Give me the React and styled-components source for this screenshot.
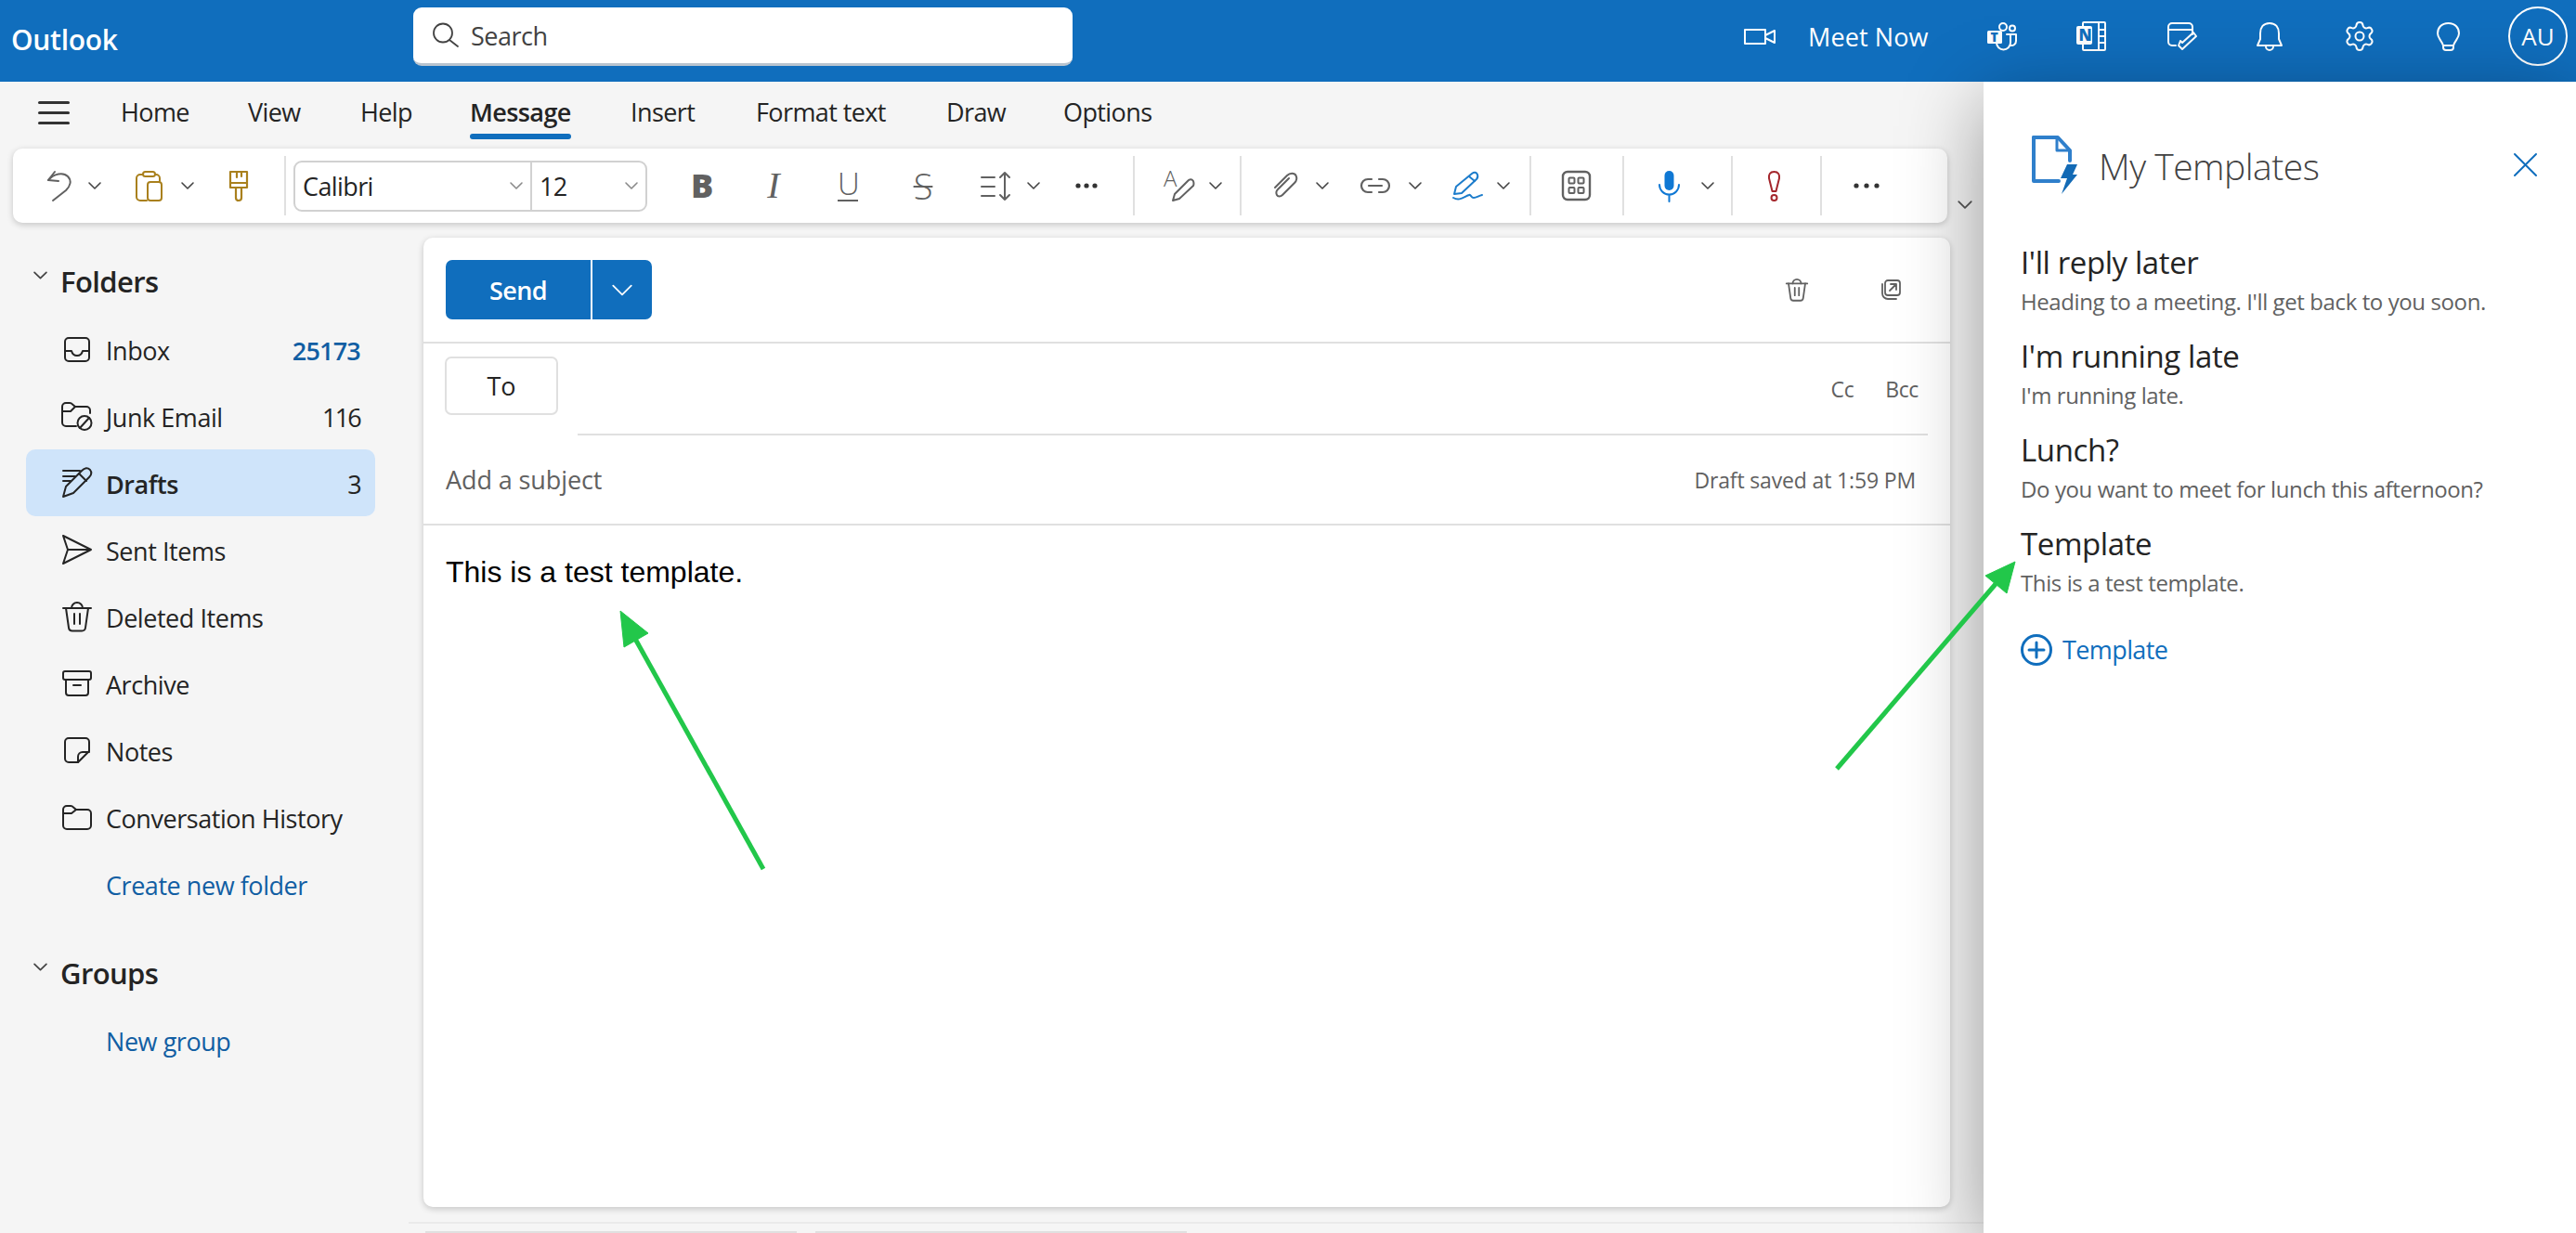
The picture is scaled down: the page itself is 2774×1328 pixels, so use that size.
import React from "react";
import styled, { createGlobalStyle } from "styled-components";
import { Settings } from "lucide-react";

const GlobalStyle = createGlobalStyle`
  html, body {
    margin: 0;
    padding: 0;
    background: #f5f5f5;
    font-family: "Open Sans", "Noto Sans", sans-serif;
    overflow: hidden;
  }
  * { box-sizing: border-box; }
`;

const Page = styled.div`
  position: relative;
  width: 2774px;
  height: 1328px;
  overflow: hidden;
  display: flex;
  flex-direction: column;
`;

const TopBar = styled.header`
  height: 88px;
  flex: none;
  display: flex;
  align-items: center;
  background: #106ebd;
  color: #fff;
`;

const Brand = styled.div`
  width: 445px;
  padding-left: 12px;
  font-size: 30px;
  font-weight: 600;
  letter-spacing: -0.3px;
  margin-top: -4px;
`;

const SearchBox = styled.div`
  width: 710px;
  height: 63px;
  margin-top: -9px;
  display: flex;
  align-items: center;
  gap: 13px;
  padding-left: 21px;
  background: #fff;
  color: #424242;
  border-radius: 9px;
  border-bottom: 3px solid #b9c4cf;
  font-size: 27px;
  letter-spacing: -0.5px;
`;

const TopSlot = styled.div`
  flex: none;
  margin-left: ${(p) => p.$ml}px;
  display: flex;
  align-items: center;
  margin-top: -10px;
`;

const MeetNow = styled.span`
  font-size: 27px;
  font-weight: 400;
  letter-spacing: 0.1px;
  white-space: nowrap;
  display: block;
  width: 128px;
`;

const Avatar = styled.div`
  width: 64px;
  height: 64px;
  border-radius: 50%;
  border: 2px solid #fff;
  display: flex;
  align-items: center;
  justify-content: center;
  font-size: 26px;
  font-weight: 400;
`;

const Svg = styled.svg`
  display: block;
  flex: none;
  fill: none;
  overflow: visible;
  stroke: currentColor;
  stroke-width: ${(p) => p.$sw || 2};
  stroke-linecap: round;
  stroke-linejoin: round;
  color: ${(p) => p.$c || "inherit"};
`;

function Ico({ w, h, vb, sw, c, children }) {
  return (
    <Svg width={w} height={h} viewBox={vb || `0 0 ${w} ${h}`} $sw={sw} $c={c}>
      {children}
    </Svg>
  );
}

const Body = styled.div`
  flex: 1;
  min-height: 0;
  display: flex;
`;

const Main = styled.div`
  width: 2136px;
  flex: none;
  display: flex;
  flex-direction: column;
`;

const Nav = styled.nav`
  height: 72px;
  flex: none;
  display: flex;
  align-items: flex-start;
  color: #242424;
`;

const Burger = styled.div`
  width: 34px;
  margin: 21px 55px 0 41px;
  display: flex;
  flex-direction: column;
  gap: 8px;
  i {
    display: block;
    height: 3px;
    border-radius: 2px;
    background: #333;
  }
`;

const Tab = styled.div`
  flex: none;
  width: ${(p) => p.$w}px;
  margin-top: 16px;
  font-size: 27px;
  line-height: 34px;
  letter-spacing: -0.6px;
  font-weight: ${(p) => (p.$active ? 600 : 400)};
`;

const TabText = styled.span`
  display: inline-block;
  white-space: nowrap;
  &::after {
    content: "";
    display: ${(p) => (p.$active ? "block" : "none")};
    height: 6px;
    margin-top: 6px;
    border-radius: 3px;
    background: #106ebd;
  }
`;

const ToolRow = styled.div`
  flex: none;
  height: 80px;
  margin-left: 14px;
  display: flex;
`;

const Toolbar = styled.div`
  width: 2083px;
  height: 80px;
  display: flex;
  align-items: center;
  background: #fff;
  border-radius: 10px;
  box-shadow: 0 2px 7px rgba(0, 0, 0, 0.2);
`;

const Slot = styled.div`
  flex: none;
  margin-left: ${(p) => p.$ml}px;
  display: flex;
  align-items: center;
  justify-content: center;
  color: ${(p) => p.$c || "#616161"};
`;

const Sep = styled.div`
  flex: none;
  width: 2px;
  height: 64px;
  margin-left: ${(p) => p.$ml}px;
  background: #e0e0e0;
`;

const FontGroup = styled.div`
  flex: none;
  width: 381px;
  height: 55px;
  margin-left: 8px;
  display: flex;
  border: 2px solid #d1d1d1;
  border-radius: 9px;
  color: #242424;
  font-size: 27px;
  letter-spacing: -0.6px;
`;

const FontCell = styled.div`
  width: ${(p) => p.$w}px;
  flex: none;
  display: flex;
  align-items: center;
  justify-content: space-between;
  padding: 0 8px 0 ${(p) => p.$pl}px;
  color: #242424;
  & + & {
    border-left: 2px solid #d1d1d1;
  }
  svg {
    color: #8a8a8a;
  }
`;

const Glyph = styled.span`
  display: block;
  width: ${(p) => p.$w}px;
  text-align: center;
  line-height: 36px;
  color: #616161;
`;

const BoldGlyph = styled(Glyph)`
  font-size: 36px;
  font-weight: 800;
  letter-spacing: 0;
`;

const ItalicGlyph = styled(Glyph)`
  font-family: "Liberation Serif", serif;
  font-size: 40px;
  font-style: italic;
`;

const UnderGlyph = styled(Glyph)`
  font-size: 33px;
  font-weight: 300;
  height: 34px;
  line-height: 30px;
  border-bottom: 2px solid #616161;
`;

const StrikeGlyph = styled(Glyph)`
  font-size: 38px;
  font-weight: 300;
  text-decoration: line-through;
  text-decoration-thickness: 2px;
`;

const SvgText = styled.text`
  stroke: none;
  fill: ${(p) => p.$fill};
  font-size: ${(p) => p.$size}px;
  font-weight: ${(p) => p.$weight || 400};
  font-family: "Open Sans", sans-serif;
`;

const ExpandSlot = styled.div`
  flex: none;
  margin: 56px 0 0 11px;
  color: #555;
`;

const Workspace = styled.div`
  flex: 1;
  min-height: 0;
  display: flex;
  margin-top: 16px;
`;

const Sidebar = styled.aside`
  width: 456px;
  flex: none;
  color: #242424;
`;

const SectionHead = styled.div`
  display: flex;
  align-items: center;
  padding: ${(p) => p.$pt}px 0 ${(p) => p.$pb}px 36px;
  gap: 14px;
  font-size: 31px;
  line-height: 36px;
  font-weight: 600;
  letter-spacing: -0.6px;
  color: #242424;
  svg {
    margin-top: -14px;
    color: #444;
  }
`;

const Row = styled.div`
  height: 72px;
  margin: 0 52px 0 28px;
  padding: 0 16px 0 38px;
  display: flex;
  align-items: center;
  border-radius: 10px;
  font-size: 27px;
  letter-spacing: -0.45px;
  background: ${(p) => (p.$active ? "#cfe4fa" : "transparent")};
  font-weight: ${(p) => (p.$active ? 600 : 400)};
`;

const RowIcon = styled.div`
  width: 34px;
  flex: none;
  display: flex;
  justify-content: center;
  margin-right: 14px;
`;

const RowLabel = styled.span`
  flex: 1;
  padding-top: 2px;
  white-space: nowrap;
  color: ${(p) => p.$c || "inherit"};
`;

const Count = styled.span`
  padding-top: 2px;
  font-weight: ${(p) => (p.$bold ? 600 : 400)};
  color: ${(p) => (p.$bold ? "#115ea3" : "#242424")};
  letter-spacing: ${(p) => (p.$bold ? "-0.8px" : "-1.8px")};
`;

const Column = styled.div`
  width: 1680px;
  flex: none;
  display: flex;
  flex-direction: column;
`;

const Card = styled.section`
  width: 1644px;
  height: 1044px;
  flex: none;
  display: flex;
  flex-direction: column;
  background: #fff;
  border-radius: 10px;
  box-shadow: 0 2px 7px rgba(0, 0, 0, 0.2);
`;

const ActionBar = styled.div`
  height: 114px;
  flex: none;
  display: flex;
  align-items: flex-start;
  padding: 24px 53px 0 24px;
  border-bottom: 2px solid #e0e0e0;
`;

const SendGroup = styled.div`
  display: flex;
  height: 64px;
  background: #106ebd;
  border-radius: 7px;
  overflow: hidden;
  color: #fff;
`;

const SendButton = styled.div`
  width: 158px;
  display: flex;
  align-items: center;
  justify-content: center;
  font-size: 27px;
  font-weight: 600;
  letter-spacing: -0.6px;
  border-right: 2px solid #fff;
`;

const SendArrow = styled.div`
  width: 64px;
  display: flex;
  align-items: center;
  justify-content: center;
`;

const ActionIcons = styled.div`
  margin-left: auto;
  display: flex;
  align-items: center;
  gap: 77px;
  height: 64px;
  color: #616161;
`;

const ToRow = styled.div`
  height: 99px;
  flex: none;
  display: flex;
  align-items: flex-start;
  padding: 14px 24px 0 23px;
`;

const ToButton = styled.div`
  width: 122px;
  height: 63px;
  flex: none;
  display: flex;
  align-items: center;
  justify-content: center;
  border: 2px solid #e0e0e0;
  border-radius: 7px;
  font-size: 27px;
  font-weight: 500;
  color: #242424;
`;

const ToField = styled.div`
  flex: 1;
  height: 85px;
  margin-left: 21px;
  padding: 0 10px 14px 0;
  display: flex;
  align-items: center;
  justify-content: flex-end;
  gap: 34px;
  border-bottom: 2px solid #e0e0e0;
  color: #616161;
  font-size: 23px;
  letter-spacing: -0.4px;
`;

const SubjectRow = styled.div`
  height: 97px;
  flex: none;
  display: flex;
  align-items: center;
  justify-content: space-between;
  padding: 0 37px 0 24px;
  border-bottom: 2px solid #e0e0e0;
  color: #616161;
`;

const SubjectText = styled.span`
  font-size: 27px;
  letter-spacing: -0.1px;
`;

const SavedText = styled.span`
  font-size: 23px;
  letter-spacing: -0.15px;
`;

const MessageBody = styled.div`
  padding: 30px 24px;
  font-family: "Liberation Sans", Arial, sans-serif;
  font-size: 32px;
  line-height: 40px;
  color: #000;
`;

const Footer = styled.div`
  margin: 16px 0 0 -16px;
  height: 12px;
  display: flex;
  gap: 20px;
  padding: 8px 0 0 18px;
  border-top: 2px solid #eaeaea;
`;

const FooterTab = styled.div`
  width: 400px;
  height: 4px;
  border-top: 2px solid #e0e0e0;
`;

const Panel = styled.aside`
  position: relative;
  z-index: 2;
  flex: none;
  width: 638px;
  background: #fff;
  box-shadow: 0 20px 80px rgba(0, 0, 0, 0.38);
`;

const PanelHeader = styled.div`
  display: flex;
  align-items: center;
  padding: 58px 42px 0 52px;
`;

const PanelTitle = styled.h2`
  margin: 2px 0 0 23px;
  font-size: 39px;
  font-weight: 300;
  letter-spacing: -0.5px;
  color: #424242;
  white-space: nowrap;
  flex: 1;
`;

const TemplateList = styled.div`
  margin-top: 52px;
  padding-left: 40px;
`;

const Template = styled.div`
  height: 101px;
`;

const TemplateName = styled.div`
  font-size: 33px;
  line-height: 44px;
  letter-spacing: -0.4px;
  color: #242424;
`;

const TemplateText = styled.div`
  margin-top: 3px;
  font-size: 24px;
  line-height: 34px;
  letter-spacing: -0.4px;
  color: #616161;
  white-space: nowrap;
`;

const AddTemplate = styled.div`
  display: flex;
  align-items: center;
  gap: 11px;
  margin-top: 16px;
  font-size: 27px;
  letter-spacing: -0.6px;
  color: #106ebd;
`;

const ArrowLayer = styled.svg`
  position: absolute;
  top: 0;
  left: 0;
  z-index: 5;
  pointer-events: none;
`;

const Chev = ({ w = 14, h = 8, sw = 1.6 }) => (
  <Ico w={w} h={h} vb="0 0 14 8" sw={sw}>
    <path d="M1 1 L7 7 L13 1" />
  </Ico>
);

const Dots = ({ w }) => (
  <Svg width={w} height={6} viewBox={`0 0 ${w} 6`} $c="#333">
    <g fill="currentColor" stroke="none">
      <circle cx="3" cy="3" r="2.6" />
      <circle cx={w / 2} cy="3" r="2.6" />
      <circle cx={w - 3} cy="3" r="2.6" />
    </g>
  </Svg>
);

const TrashPath = () => (
  <>
    <path d="M1 7 H31" />
    <path d="M10 7 a6 6 0 0 1 12 0" />
    <path d="M4 7 L7 28 a4 4 0 0 0 4 3.5 H21 a4 4 0 0 0 4 -3.5 L28 7" />
    <path d="M13 13 V24 M19 13 V24" />
  </>
);

const folders = [
  {
    name: "Inbox",
    count: "25173",
    bold: true,
    icon: (
      <Ico w={28} h={27}>
        <rect x="1" y="1" width="26" height="25" rx="4" />
        <path d="M1 15 H8 C9 19 11 20 14 20 C17 20 19 19 20 15 H27" />
      </Ico>
    ),
  },
  {
    name: "Junk Email",
    count: "116",
    icon: (
      <Ico w={34} h={31}>
        <path d="M16 26 H5 a4 4 0 0 1 -4 -4 V5 a4 4 0 0 1 4 -4 H9 a4 4 0 0 1 3 1.4 L15 5 H27 a4 4 0 0 1 4 4 V12" />
        <path d="M1 10 H10 L15 5" />
        <circle cx="25" cy="22.5" r="7.5" />
        <path d="M20 28 L30 17" />
      </Ico>
    ),
  },
  {
    name: "Drafts",
    count: "3",
    active: true,
    icon: (
      <Ico w={33} h={34}>
        <path d="M1 4 H19 M1 10 H14 M1 15 H9" />
        <path d="M1 32 L4 21 L21 4 Q26 -1 30 3 Q33 7 29 11 L12 28 Z" />
        <path d="M18 7 L26 15" />
      </Ico>
    ),
  },
  {
    name: "Sent Items",
    icon: (
      <Ico w={33} h={32}>
        <path d="M1 1 L31 16 L1 31 L6 16 Z M6 16 H31" />
      </Ico>
    ),
  },
  {
    name: "Deleted Items",
    icon: (
      <Ico w={32} h={33}>
        <TrashPath />
      </Ico>
    ),
  },
  {
    name: "Archive",
    icon: (
      <Ico w={32} h={28}>
        <rect x="1" y="1" width="30" height="9" rx="2" />
        <path d="M4 10 V24 a3 3 0 0 0 3 3 H25 a3 3 0 0 0 3 -3 V10" />
        <path d="M12 16 H20" />
      </Ico>
    ),
  },
  {
    name: "Notes",
    icon: (
      <Ico w={28} h={28}>
        <path d="M27 15 V5 a4 4 0 0 0 -4 -4 H5 a4 4 0 0 0 -4 4 V23 a4 4 0 0 0 4 4 H15 Z" />
        <path d="M15 27 V21 a5 5 0 0 1 5 -5 H27" />
      </Ico>
    ),
  },
  {
    name: "Conversation History",
    icon: (
      <Ico w={32} h={27}>
        <path d="M1 5 a4 4 0 0 1 4 -4 H9 a4 4 0 0 1 3 1.4 L15 5 H27 a4 4 0 0 1 4 4 V22 a4 4 0 0 1 -4 4 H5 a4 4 0 0 1 -4 -4 Z" />
        <path d="M1 9 H10 L15 5" />
      </Ico>
    ),
  },
];

const templates = [
  ["I'll reply later", "Heading to a meeting. I'll get back to you soon."],
  ["I'm running late", "I'm running late."],
  ["Lunch?", "Do you want to meet for lunch this afternoon?"],
  ["Template", "This is a test template."],
];

const tabs = [
  ["Home", 137],
  ["View", 121],
  ["Help", 118],
  ["Message", 173, true],
  ["Insert", 135],
  ["Format text", 205],
  ["Draw", 126],
  ["Options", 120],
];

const GOLD = "#a9801d";
const BLUE = "#1c7ccb";

export default function App() {
  return (
    <Page>
      <GlobalStyle />
      <TopBar>
        <Brand>Outlook</Brand>
        <SearchBox>
          <Ico w={28} h={26} sw={1.8}>
            <circle cx="11" cy="10.5" r="10" />
            <path d="M18 18 L27 25" />
          </Ico>
          Search
        </SearchBox>
        <TopSlot $ml={723}>
          <Ico w={34} h={17} sw={2}>
            <rect x="1" y="1" width="22" height="15" />
            <path d="M23 7 L33 2 V15 L23 10" />
          </Ico>
        </TopSlot>
        <TopSlot $ml={35}>
          <MeetNow>Meet Now</MeetNow>
        </TopSlot>
        <TopSlot $ml={65}>
          <Ico w={32} h={30} sw={2}>
            <circle cx="17" cy="5" r="4" />
            <circle cx="27" cy="6.5" r="3" />
            <path d="M21 13 H31 V20 a5 5 0 0 1 -6 5" />
            <path d="M25 13 V22 a7.5 7.5 0 0 1 -15 0 V21" />
            <rect x="0" y="9" width="16" height="14" rx="1.5" fill="#fff" stroke="none" />
            <SvgText x="3.6" y="21" $fill="#106ebd" $size={14} $weight={800}>
              T
            </SvgText>
          </Ico>
        </TopSlot>
        <TopSlot $ml={64}>
          <Ico w={32} h={32} sw={2}>
            <rect x="7" y="1" width="24" height="30" rx="1" />
            <path d="M24 1 V31 M24 9 H31 M24 16 H31 M24 23 H31" />
            <rect x="0" y="5" width="17" height="20" rx="2" fill="#fff" stroke="none" />
            <SvgText x="2.4" y="21" $fill="#106ebd" $size={17} $weight={800}>
              N
            </SvgText>
          </Ico>
        </TopSlot>
        <TopSlot $ml={66}>
          <Ico w={32} h={32} sw={2}>
            <path d="M9 26 H5 a4 4 0 0 1 -4 -4 V6 a4 4 0 0 1 4 -4 H23 a4 4 0 0 1 4 4 V14 M1 9 H27" />
            <path d="M12 26 L16 30 L31 16 L28 12 L16 23 L14 21 Z" />
          </Ico>
        </TopSlot>
        <TopSlot $ml={64}>
          <Ico w={28} h={31} sw={2}>
            <path d="M14 1 C7 1 4 6 4 12 V18 L1 25 H27 L24 18 V12 C24 6 21 1 14 1 Z" />
            <path d="M10 26 a4 4 0 0 0 8 0" />
          </Ico>
        </TopSlot>
        <TopSlot $ml={65}>
          <Settings size={36} strokeWidth={1.35} />
        </TopSlot>
        <TopSlot $ml={65}>
          <Ico w={25} h={31} sw={2}>
            <path d="M12.5 1 C5 1 1 6 1 12 C1 17 5 19 7 25 H18 C20 19 24 17 24 12 C24 6 20 1 12.5 1 Z" />
            <path d="M7 25 V27 a3 3 0 0 0 3 3 H15 a3 3 0 0 0 3 -3 V25" />
          </Ico>
        </TopSlot>
        <TopSlot $ml={52}>
          <Avatar>AU</Avatar>
        </TopSlot>
      </TopBar>

      <Body>
        <Main>
          <Nav>
            <Burger>
              <i />
              <i />
              <i />
            </Burger>
            {tabs.map(([name, w, active]) => (
              <Tab key={name} $w={w} $active={active}>
                <TabText $active={active}>{name}</TabText>
              </Tab>
            ))}
          </Nav>

          <ToolRow>
            <Toolbar>
              <Slot $ml={36}>
                <Ico w={28} h={34} sw={2}>
                  <path d="M9 2 L2 11 L13 12" />
                  <path d="M2 11 C8 4 18 2 23 7 C28 12 25 18 21 22 L7 33" />
                </Ico>
              </Slot>
              <Slot $ml={17} $c="#444"><Chev /></Slot>
              <Slot $ml={37} $c={GOLD}>
                <Ico w={29} h={33} sw={2}>
                  <path d="M8 4 H5 a4 4 0 0 0 -4 4 V28 a4 4 0 0 0 4 4 H12" />
                  <rect x="8" y="1" width="13" height="5" rx="2.5" />
                  <path d="M21 4 h1 a4 4 0 0 1 4 4 V11" />
                  <rect x="13" y="12" width="15" height="20" rx="3" />
                </Ico>
              </Slot>
              <Slot $ml={20} $c="#444"><Chev /></Slot>
              <Slot $ml={38} $c={GOLD}>
                <Ico w={20} h={33} sw={2.2}>
                  <path d="M1 1 H19 V18 H1 Z M1 13 H19 M8 1 V7 M13 1 V6" />
                  <path d="M7 18 V29 a3 3 0 0 0 6 0 V18" />
                </Ico>
              </Slot>
              <Sep $ml={39} />
              <FontGroup>
                <FontCell $w={253} $pl={8}>
                  Calibri
                  <Chev />
                </FontCell>
                <FontCell $w={124} $pl={8}>
                  12
                  <Chev />
                </FontCell>
              </FontGroup>
              <Slot $ml={47}><BoldGlyph $w={20}>B</BoldGlyph></Slot>
              <Slot $ml={57}><ItalicGlyph $w={24}>I</ItalicGlyph></Slot>
              <Slot $ml={57}><UnderGlyph $w={22}>U</UnderGlyph></Slot>
              <Slot $ml={57}><StrikeGlyph $w={26}>S</StrikeGlyph></Slot>
              <Slot $ml={49}>
                <Ico w={33} h={33} sw={2}>
                  <path d="M1 7 H15 M1 17 H15 M1 27 H15" />
                  <path d="M26 2 V31 M21 7 L26 2 L31 7 M21 26 L26 31 L31 26" />
                </Ico>
              </Slot>
              <Slot $ml={17} $c="#444"><Chev /></Slot>
              <Slot $ml={38}><Dots w={24} /></Slot>
              <Sep $ml={38} />
              <Slot $ml={32}>
                <Ico w={32} h={34} sw={2}>
                  <SvgText x="-1" y="18" $fill="#616161" $size={24} $weight={300}>
                    A
                  </SvgText>
                  <path d="M9 33 L11 26 L26 11 Q29 9 31 12 Q32 15 31 17 L16 31 Z" />
                </Ico>
              </Slot>
              <Slot $ml={16} $c="#444"><Chev /></Slot>
              <Sep $ml={19} />
              <Slot $ml={34}>
                <Ico w={26} h={30} sw={2}>
                  <path d="M2 17 L15 4 C18 1 23 1 24.5 4 C26 7 25 10 23 12 L10 25 C8 27 5 27 4 25 C3 23 3 21 5 19 L17 7" />
                </Ico>
              </Slot>
              <Slot $ml={20} $c="#444"><Chev /></Slot>
              <Slot $ml={34}>
                <Ico w={32} h={16} sw={2.2}>
                  <path d="M12 1 H8 a7 7 0 0 0 0 14 H12 M20 1 H24 a7 7 0 0 1 0 14 H20 M9 8 H23" />
                </Ico>
              </Slot>
              <Slot $ml={20} $c="#444"><Chev /></Slot>
              <Slot $ml={33} $c={BLUE}>
                <Ico w={32} h={32} sw={2}>
                  <path d="M2 25 L4 17 L21 3 Q25 0 27 4 Q28 7 26 9 L10 24 Z" />
                  <path d="M18 6 L24 11" />
                  <path d="M1 29 C8 33 12 28 18 26 C20 25 20 29 23 29 C26 29 28 27 32 26" />
                </Ico>
              </Slot>
              <Slot $ml={16} $c="#444"><Chev /></Slot>
              <Sep $ml={21} />
              <Slot $ml={33}>
                <Ico w={31} h={32} sw={2.4}>
                  <rect x="1" y="1" width="29" height="30" rx="5" />
                  <g strokeWidth="2">
                    <rect x="7.5" y="7.5" width="6" height="6" rx="1" />
                    <rect x="17.5" y="7.5" width="6" height="6" rx="1" />
                    <rect x="7.5" y="18" width="6" height="6" rx="1" />
                    <rect x="17.5" y="18" width="6" height="6" rx="1" />
                  </g>
                </Ico>
              </Slot>
              <Sep $ml={34} />
              <Slot $ml={37} $c="#0f78d4">
                <Ico w={23} h={33} sw={2}>
                  <rect x="6.5" y="0" width="10" height="21" rx="5" fill="currentColor" stroke="none" />
                  <path d="M1 15 a10.5 10.5 0 0 0 21 0" />
                  <path d="M11.5 26 V33" />
                </Ico>
              </Slot>
              <Slot $ml={23} $c="#444"><Chev /></Slot>
              <Sep $ml={18} />
              <Slot $ml={38} $c="#a4262c">
                <Ico w={13} h={33} sw={2}>
                  <path d="M6.5 1 C2 1 0.5 4 1 8 L4.5 22 H8.5 L12 8 C12.5 4 11 1 6.5 1 Z" />
                  <circle cx="6.5" cy="29" r="3" />
                </Ico>
              </Slot>
              <Sep $ml={43} />
              <Slot $ml={34}><Dots w={28} /></Slot>
            </Toolbar>
            <ExpandSlot>
              <Chev w={16} h={9} />
            </ExpandSlot>
          </ToolRow>

          <Workspace>
            <Sidebar>
              <SectionHead $pt={29} $pb={19}>
                <Chev w={15} h={9} />
                Folders
              </SectionHead>
              {folders.map((f) => (
                <Row key={f.name} $active={f.active}>
                  <RowIcon>{f.icon}</RowIcon>
                  <RowLabel>{f.name}</RowLabel>
                  {f.count && <Count $bold={f.bold}>{f.count}</Count>}
                </Row>
              ))}
              <Row>
                <RowIcon />
                <RowLabel $c="#115ea3">Create new folder</RowLabel>
              </Row>
              <SectionHead $pt={42} $pb={18}>
                <Chev w={15} h={9} />
                Groups
              </SectionHead>
              <Row>
                <RowIcon />
                <RowLabel $c="#115ea3">New group</RowLabel>
              </Row>
            </Sidebar>

            <Column>
              <Card>
                <ActionBar>
                  <SendGroup>
                    <SendButton>Send</SendButton>
                    <SendArrow>
                      <Chev w={24} h={13} sw={1.1} />
                    </SendArrow>
                  </SendGroup>
                  <ActionIcons>
                    <Ico w={24} h={27} vb="0 0 32 33" sw={2.4}>
                      <TrashPath />
                    </Ico>
                    <Ico w={23} h={23} sw={1.8}>
                      <rect x="6" y="1" width="16" height="16" rx="3" />
                      <path d="M11 12 L18 5 M12 5 H18 V11" />
                      <path d="M3 5 V15 a6 6 0 0 0 6 6 H18" />
                    </Ico>
                  </ActionIcons>
                </ActionBar>
                <ToRow>
                  <ToButton>To</ToButton>
                  <ToField>
                    <span>Cc</span>
                    <span>Bcc</span>
                  </ToField>
                </ToRow>
                <SubjectRow>
                  <SubjectText>Add a subject</SubjectText>
                  <SavedText>Draft saved at 1:59 PM</SavedText>
                </SubjectRow>
                <MessageBody>This is a test template.</MessageBody>
              </Card>
              <Footer>
                <FooterTab />
                <FooterTab />
              </Footer>
            </Column>
          </Workspace>
        </Main>

        <Panel>
          <PanelHeader>
            <Ico w={49} h={63} sw={4} c="#2f7fcb">
              <path d="M2 2 H28 L41 16 V27" />
              <path d="M2 2 V49 H29" />
              <path d="M27 3 V16 H41" strokeWidth="3" />
              <path d="M38 31 H49 L44 42 H49 L32 63 L38 46 H31 Z" fill="#136ab5" stroke="none" />
            </Ico>
            <PanelTitle>My Templates</PanelTitle>
            <Ico w={25} h={25} sw={2} c="#106ebd">
              <path d="M1 1 L24 24 M24 1 L1 24" />
            </Ico>
          </PanelHeader>
          <TemplateList>
            {templates.map(([name, text]) => (
              <Template key={name}>
                <TemplateName>{name}</TemplateName>
                <TemplateText>{text}</TemplateText>
              </Template>
            ))}
            <AddTemplate>
              <Ico w={34} h={34} sw={3} c="#106ebd">
                <circle cx="17" cy="17" r="15.5" />
                <path d="M17 9 V25 M9 17 H25" />
              </Ico>
              Template
            </AddTemplate>
          </TemplateList>
        </Panel>
      </Body>

      <ArrowLayer width="2774" height="1328" viewBox="0 0 2774 1328">
        <g fill="#22c74a" stroke="#22c74a" strokeWidth="5">
          <path d="M822 936 L684 688" />
          <path d="M668 658 L698 682 L672 697 Z" strokeWidth="1" />
          <path d="M1978 828 L2149 629" />
          <path d="M2170 605 L2161 639 L2138 620 Z" strokeWidth="1" />
        </g>
      </ArrowLayer>
    </Page>
  );
}
